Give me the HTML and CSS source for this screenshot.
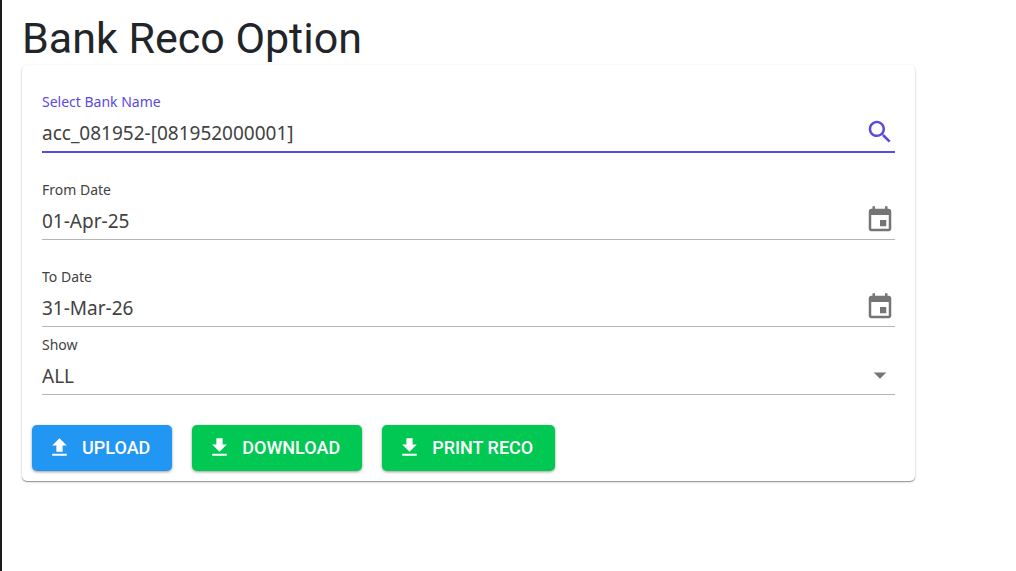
FILE: index.html
```html
<!DOCTYPE html>
<html lang="en">
<head>
<meta charset="utf-8">
<meta name="viewport" content="width=device-width, initial-scale=1">
<title>Bank Reco Option</title>
<link rel="stylesheet" href="styles.css">
</head>
<body>
<main class="page">
  <h1 class="title">Bank Reco Option</h1>
  <form class="card">
    <div class="field field-active">
      <label class="label" for="bank">Select Bank Name</label>
      <div class="control">
        <input class="input" id="bank" type="text" value="acc_081952-[081952000001]">
        <button class="icon-button" type="button" aria-label="Search"><svg class="icon" viewBox="0 0 24 24"><path d="M15.5 14h-.79l-.28-.27C15.41 12.59 16 11.11 16 9.5 16 5.91 13.09 3 9.5 3S3 5.91 3 9.5 5.91 16 9.5 16c1.61 0 3.09-.59 4.23-1.57l.27.28v.79l5 4.99L20.49 19l-4.99-5zm-6 0C7.01 14 5 11.99 5 9.5S7.01 5 9.5 5 14 7.01 14 9.5 11.99 14 9.5 14z"/></svg></button>
      </div>
    </div>
    <div class="field">
      <label class="label" for="from">From Date</label>
      <div class="control">
        <input class="input" id="from" type="text" value="01-Apr-25">
        <button class="icon-button" type="button" aria-label="Choose from date"><svg class="icon" viewBox="0 0 24 24"><path d="M17 12h-5v5h5v-5zM16 1v2H8V1H6v2H5c-1.11 0-1.99.9-1.99 2L3 19c0 1.1.89 2 2 2h14c1.1 0 2-.9 2-2V5c0-1.1-.9-2-2-2h-1V1h-2zm3 18H5V8h14v11z"/></svg></button>
      </div>
    </div>
    <div class="field">
      <label class="label" for="to">To Date</label>
      <div class="control">
        <input class="input" id="to" type="text" value="31-Mar-26">
        <button class="icon-button" type="button" aria-label="Choose to date"><svg class="icon" viewBox="0 0 24 24"><path d="M17 12h-5v5h5v-5zM16 1v2H8V1H6v2H5c-1.11 0-1.99.9-1.99 2L3 19c0 1.1.89 2 2 2h14c1.1 0 2-.9 2-2V5c0-1.1-.9-2-2-2h-1V1h-2zm3 18H5V8h14v11z"/></svg></button>
      </div>
    </div>
    <div class="field field-select">
      <label class="label" for="show">Show</label>
      <div class="control">
        <select class="input" id="show"><option>ALL</option></select>
        <svg class="icon arrow" viewBox="0 0 24 24" aria-hidden="true"><path d="M7 10l5 5 5-5z"/></svg>
      </div>
    </div>
    <div class="actions">
      <button class="button button-blue" type="button"><svg class="button-icon" viewBox="0 0 24 24"><path d="M9 16h6v-6h4l-7-7-7 7h4v6zm-4 2h14v2H5v-2z"/></svg>UPLOAD</button>
      <button class="button button-green" type="button"><svg class="button-icon" viewBox="0 0 24 24"><path d="M19 9h-4V3H9v6H5l7 7 7-7zM5 18v2h14v-2H5z"/></svg>DOWNLOAD</button>
      <button class="button button-green" type="button"><svg class="button-icon" viewBox="0 0 24 24"><path d="M19 9h-4V3H9v6H5l7 7 7-7zM5 18v2h14v-2H5z"/></svg>PRINT RECO</button>
    </div>
  </form>
</main>
</body>
</html>
```
FILE: styles.css
```css
* {
  box-sizing: border-box;
}

body {
  margin: 0;
  background: #fff;
  color: #212529;
  font-family: Roboto, sans-serif;
}

.page {
  min-height: 100vh;
  padding: 12px 101px 20px 20px;
  border-left: 2px solid #1a1a1a;
}

.title {
  margin: 0;
  font-size: 43px;
  font-weight: 400;
  line-height: 53px;
}

.card {
  padding: 20px 20px 10px;
  border-radius: 5px;
  box-shadow: 0 1px 1px rgba(0, 0, 0, 0.35), 0 1px 3px rgba(0, 0, 0, 0.15);
  font-family: "Noto Sans", sans-serif;
}

.field {
  height: 67px;
  margin-bottom: 20px;
  border-bottom: 1px solid #b5b5b5;
}

.field-active {
  height: 68px;
  border-bottom: 2px solid #594ae2;
}

.field-select {
  height: 61px;
  margin: -13px 0 30px;
}

.label {
  display: block;
  padding-top: 6px;
  color: #424242;
  font-size: 14px;
  line-height: 22px;
}

.field-active .label {
  color: #594ae2;
}

.field-select .label {
  padding-top: 0;
}

.control {
  display: flex;
  align-items: center;
  height: 38px;
}

.input {
  flex: 1;
  min-width: 0;
  padding: 1px 0 0;
  border: 0;
  outline: 0;
  background: transparent;
  color: #424242;
  font-family: "Noto Sans", sans-serif;
  font-size: 19px;
  appearance: none;
}

.icon-button {
  display: flex;
  padding: 0;
  border: 0;
  background: none;
  color: #757575;
}

.field-active .icon-button {
  color: #594ae2;
}

.icon {
  width: 30px;
  height: 30px;
  fill: currentColor;
}

.arrow {
  color: #757575;
  pointer-events: none;
}

.actions {
  display: flex;
  flex-wrap: wrap;
  gap: 20px;
  margin: 0 -10px;
}

.button {
  display: flex;
  align-items: center;
  gap: 10px;
  height: 46px;
  padding: 0 22px 2px 15px;
  border: 0;
  border-radius: 5px;
  box-shadow: 0 1px 3px rgba(0, 0, 0, 0.4);
  color: #fff;
  font-family: Roboto, sans-serif;
  font-size: 18px;
  font-weight: 500;
}

.button-blue {
  background: #2196f3;
}

.button-green {
  background: #00c853;
}

.button-icon {
  width: 25px;
  height: 25px;
  fill: currentColor;
}
```
